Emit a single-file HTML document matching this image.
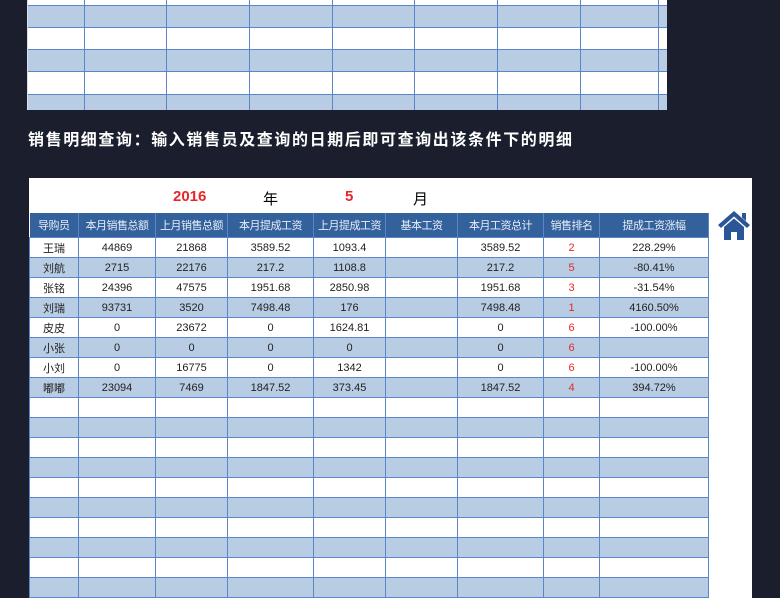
<!DOCTYPE html>
<html><head><meta charset="utf-8"><style>
body{margin:0;width:780px;height:585px;background:#1b1e2c;position:relative;overflow:hidden;font-family:"Liberation Sans","Noto Sans CJK SC",sans-serif}
.top{position:absolute;left:27px;top:-2px;width:639px;height:112px;background:#fff;overflow:hidden;border-left:1px solid #dde}
.hl{position:absolute;left:0;width:100%;height:1px;background:#5b85c9}
.vl{position:absolute;top:0;height:100%;width:1px;background:#5b85c9}
.br{position:absolute;left:0;width:100%;background:#b8cce4}
.title{position:absolute;left:28px;top:126px;color:#fff;font-size:16px;font-weight:bold;letter-spacing:1.6px}
.panel{position:absolute;left:29px;top:178px;width:723px;height:420px;background:#fff}
table{position:absolute;left:0;top:35px;border-collapse:collapse;font-size:11px;color:#222;table-layout:fixed;width:679px}
td{border:1px solid #5b85c9;height:19px;padding:0;text-align:center;white-space:nowrap;overflow:hidden}
th{background:#33619b;color:#e8eef8;font-weight:normal;height:24px;border-right:1px solid #5b85c9;font-size:11px;padding:0;white-space:nowrap;overflow:hidden;letter-spacing:-0.5px}
tr.b td{background:#b8cce4}
.r{color:#e8262a}
.ym{position:absolute;top:10px;font-size:15px}
</style></head><body>
<div class="top">
<div class="br" style="top:7px;height:22px"></div>
<div class="br" style="top:51px;height:22px"></div>
<div class="br" style="top:96px;height:20px"></div>
<div class="hl" style="top:7px"></div><div class="hl" style="top:29px"></div><div class="hl" style="top:51px"></div><div class="hl" style="top:73px"></div><div class="hl" style="top:96px"></div>
<div class="vl" style="left:56px"></div><div class="vl" style="left:138px"></div><div class="vl" style="left:221px"></div><div class="vl" style="left:304px"></div><div class="vl" style="left:386px"></div><div class="vl" style="left:469px"></div><div class="vl" style="left:552px"></div><div class="vl" style="left:630px"></div>
</div>
<div class="title">销售明细查询：输入销售员及查询的日期后即可查询出该条件下的明细</div>
<div class="panel">
<div class="ym r" style="left:144px;font-weight:bold">2016</div>
<div class="ym" style="left:234px">年</div>
<div class="ym r" style="left:316px;font-weight:bold">5</div>
<div class="ym" style="left:384px">月</div>
<svg style="position:absolute;left:688px;top:31px" width="34" height="32" viewBox="0 0 34 32"><path d="M1 16 L17 2 L33 16 L30 19 L17 7.5 L4 19Z M25 4h4v8l-4-3.5z M7 18 L17 9.5 L27 18 V31 H20 V23 H14 V31 H7Z" fill="#2a5597"/></svg>
<table>
<colgroup><col style="width:49px"><col style="width:77px"><col style="width:72px"><col style="width:86px"><col style="width:72px"><col style="width:72px"><col style="width:86px"><col style="width:56px"><col style="width:109px"></colgroup>
<tr><th>导购员</th><th>本月销售总额</th><th>上月销售总额</th><th>本月提成工资</th><th>上月提成工资</th><th>基本工资</th><th>本月工资总计</th><th>销售排名</th><th>提成工资涨幅</th></tr>
<tr><td>王瑞</td><td>44869</td><td>21868</td><td>3589.52</td><td>1093.4</td><td></td><td>3589.52</td><td class="r">2</td><td>228.29%</td></tr>
<tr class="b"><td>刘航</td><td>2715</td><td>22176</td><td>217.2</td><td>1108.8</td><td></td><td>217.2</td><td class="r">5</td><td>-80.41%</td></tr>
<tr><td>张铭</td><td>24396</td><td>47575</td><td>1951.68</td><td>2850.98</td><td></td><td>1951.68</td><td class="r">3</td><td>-31.54%</td></tr>
<tr class="b"><td>刘瑞</td><td>93731</td><td>3520</td><td>7498.48</td><td>176</td><td></td><td>7498.48</td><td class="r">1</td><td>4160.50%</td></tr>
<tr><td>皮皮</td><td>0</td><td>23672</td><td>0</td><td>1624.81</td><td></td><td>0</td><td class="r">6</td><td>-100.00%</td></tr>
<tr class="b"><td>小张</td><td>0</td><td>0</td><td>0</td><td>0</td><td></td><td>0</td><td class="r">6</td><td></td></tr>
<tr><td>小刘</td><td>0</td><td>16775</td><td>0</td><td>1342</td><td></td><td>0</td><td class="r">6</td><td>-100.00%</td></tr>
<tr class="b"><td>嘟嘟</td><td>23094</td><td>7469</td><td>1847.52</td><td>373.45</td><td></td><td>1847.52</td><td class="r">4</td><td>394.72%</td></tr>
<tr><td></td><td></td><td></td><td></td><td></td><td></td><td></td><td></td><td></td></tr>
<tr class="b"><td></td><td></td><td></td><td></td><td></td><td></td><td></td><td></td><td></td></tr>
<tr><td></td><td></td><td></td><td></td><td></td><td></td><td></td><td></td><td></td></tr>
<tr class="b"><td></td><td></td><td></td><td></td><td></td><td></td><td></td><td></td><td></td></tr>
<tr><td></td><td></td><td></td><td></td><td></td><td></td><td></td><td></td><td></td></tr>
<tr class="b"><td></td><td></td><td></td><td></td><td></td><td></td><td></td><td></td><td></td></tr>
<tr><td></td><td></td><td></td><td></td><td></td><td></td><td></td><td></td><td></td></tr>
<tr class="b"><td></td><td></td><td></td><td></td><td></td><td></td><td></td><td></td><td></td></tr>
<tr><td></td><td></td><td></td><td></td><td></td><td></td><td></td><td></td><td></td></tr>
<tr class="b"><td></td><td></td><td></td><td></td><td></td><td></td><td></td><td></td><td></td></tr>
</table>
</div>
</body></html>
